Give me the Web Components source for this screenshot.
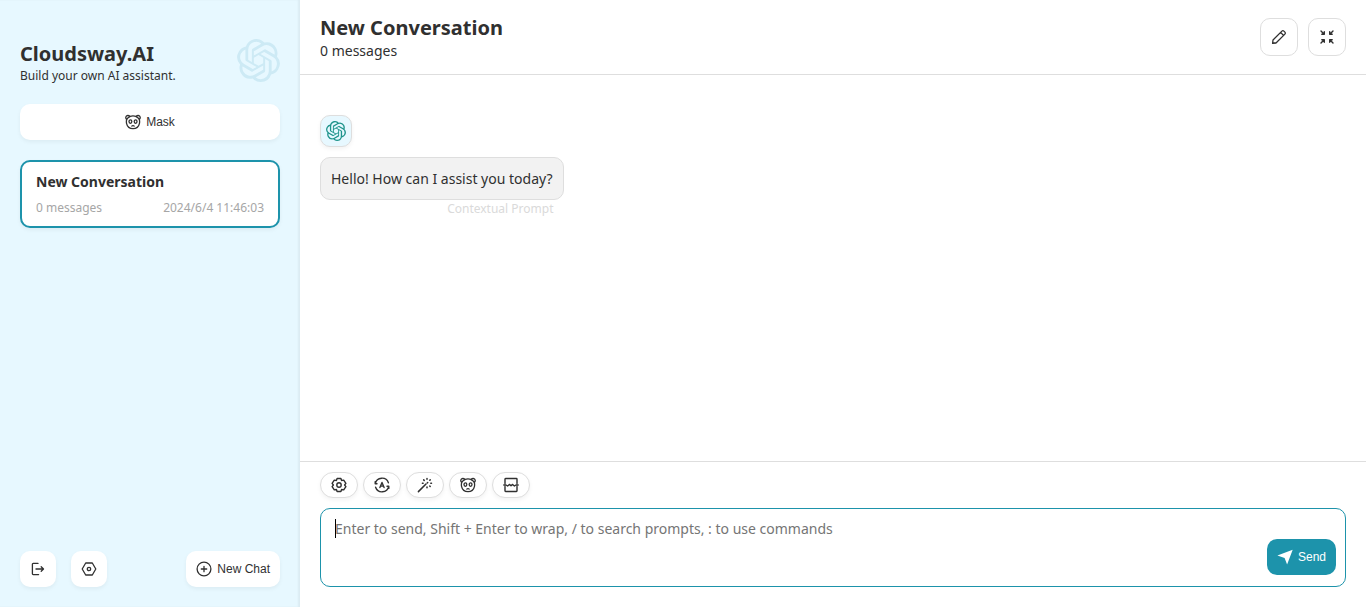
<!DOCTYPE html>
<html lang="en">
<head>
<meta charset="utf-8">
<title>Cloudsway.AI</title>
<style>
html,body{height:100%;margin:0}
body{font-family:"Noto Sans",sans-serif;color:#303030;background:#fff}
</style>
</head>
<body>
<chat-app></chat-app>
<script>
const stroke = (body, w = 1.3) => `<svg viewBox="0 0 16 16" fill="none" stroke="currentColor" stroke-width="${w}" stroke-linecap="round" stroke-linejoin="round">${body}</svg>`;
const ICONS = {
  logo: `<svg viewBox="0 0 24 24" fill="currentColor"><path d="M22.2819 9.8211a5.9847 5.9847 0 0 0-.5157-4.9108 6.0462 6.0462 0 0 0-6.5098-2.9A6.0651 6.0651 0 0 0 4.9807 4.1818a5.9847 5.9847 0 0 0-3.9977 2.9 6.0462 6.0462 0 0 0 .7427 7.0966 5.98 5.98 0 0 0 .511 4.9107 6.051 6.051 0 0 0 6.5146 2.9001A5.9847 5.9847 0 0 0 13.2599 24a6.0557 6.0557 0 0 0 5.7718-4.2058 5.9894 5.9894 0 0 0 3.9977-2.9001 6.0557 6.0557 0 0 0-.7475-7.0729zm-9.022 12.6081a4.4755 4.4755 0 0 1-2.8764-1.0408l.1419-.0804 4.7783-2.7582a.7948.7948 0 0 0 .3927-.6813v-6.7369l2.02 1.1686a.071.071 0 0 1 .038.052v5.5826a4.504 4.504 0 0 1-4.4945 4.4944zm-9.6607-4.1254a4.4708 4.4708 0 0 1-.5346-3.0137l.142.0852 4.783 2.7582a.7712.7712 0 0 0 .7806 0l5.8428-3.3685v2.3324a.0804.0804 0 0 1-.0332.0615L9.74 19.9502a4.4992 4.4992 0 0 1-6.1408-1.6464zM2.3408 7.8956a4.485 4.485 0 0 1 2.3655-1.9728V11.6a.7664.7664 0 0 0 .3879.6765l5.8144 3.3543-2.0201 1.1685a.0757.0757 0 0 1-.071 0l-4.8303-2.7865A4.504 4.504 0 0 1 2.3408 7.872zm16.5963 3.8558L13.1038 8.364 15.1192 7.2a.0757.0757 0 0 1 .071 0l4.8303 2.7913a4.4944 4.4944 0 0 1-.6765 8.1042v-5.6772a.79.79 0 0 0-.407-.667zm2.0107-3.0231l-.142-.0852-4.7735-2.7818a.7759.7759 0 0 0-.7854 0L9.409 9.2297V6.8974a.0662.0662 0 0 1 .0284-.0615l4.8303-2.7866a4.4992 4.4992 0 0 1 6.6802 4.66zM8.3065 12.863l-2.02-1.1638a.0804.0804 0 0 1-.038-.0567V6.0742a4.4992 4.4992 0 0 1 7.3757-3.4537l-.142.0805L8.704 5.459a.7948.7948 0 0 0-.3927.6813zm1.0976-2.3654l2.602-1.4998 2.6069 1.4998v2.9994l-2.5974 1.4997-2.6067-1.4997Z"/></svg>`,
  panda: stroke(`<path d="M5 2.4C6.9 1.8 9.1 1.8 11 2.4M1.8 5.2C1.3 6.6 1.3 8.3 1.6 9.7C2.3 12.8 4.8 14.7 8 14.7S13.7 12.8 14.4 9.7C14.7 8.3 14.7 6.6 14.2 5.2M1.8 5.4C.2 4.3.5 1.7 2.7 1.5C3.8 1.4 4.7 1.8 5 2.6C3.7 3.1 2.5 4 1.8 5.4M14.2 5.4C15.8 4.3 15.5 1.7 13.3 1.5C12.2 1.4 11.3 1.8 11 2.6C12.3 3.1 13.5 4 14.2 5.4M6.8 12.1C7.4 11.4 8.6 11.4 9.2 12.1"/><ellipse cx="5.4" cy="7.6" rx="1.4" ry="1.8"/><ellipse cx="10.6" cy="7.6" rx="1.4" ry="1.8"/>`),
  exit: stroke(`<path d="M8 2.4H3.2C2.7 2.4 2.4 2.7 2.4 3.2V12.8C2.4 13.3 2.7 13.6 3.2 13.6H8.6M6 8H13.4M11.2 5.7L13.5 8L11.2 10.3"/>`),
  hex: stroke(`<path d="M4.7 2H11.3L14.8 8L11.3 14H4.7L1.2 8Z"/><circle cx="8" cy="8" r="1.7"/>`),
  add: stroke(`<circle cx="8" cy="8" r="6.9"/><path d="M8 5.3V10.7M5.3 8H10.7"/>`),
  pencil: stroke(`<path d="M1.6 14.4L2 11L10.9 2.1C11.5 1.5 12.3 1.5 12.9 2.1L13.9 3.1C14.5 3.7 14.5 4.5 13.9 5.1L5 14ZM9.8 3.6L12.4 6.2M2 14L5 14"/>`),
  shrink: stroke(`<path d="M2 2L5.2 5.2M5.3 2.8V5.3H2.8M14 2L10.8 5.2M10.7 2.8V5.3H13.2M2 14L5.2 10.8M2.8 10.7H5.3V13.2M14 14L10.8 10.8M13.2 10.7H10.7V13.2"/>`, 1.4),
  gear: stroke(`<path d="M6.1 1.5H9.9L10.6 3.5L12.7 3.1L14.9 6.4L13.6 8L14.9 9.6L12.7 12.9L10.6 12.5L9.9 14.5H6.1L5.4 12.5L3.3 12.9L1.1 9.6L2.4 8L1.1 6.4L3.3 3.1L5.4 3.5Z"/><circle cx="8" cy="8" r="2.2"/>`, 1.4),
  auto: stroke(`<path d="M1.3 6.6A6.8 6.8 0 0 1 14.4 5.8M14.7 9.4A6.8 6.8 0 0 1 1.6 10.2M1.2 4.6V6.7H3M14.8 11.4V9.3H13M5.9 10.5L8 5.5L10.1 10.5M6.7 9.1H9.3"/>`, 1.4),
  wand: stroke(`<path d="M1.4 14.6L9 7"/><path d="M10 1.5V2.3M6.7 2.9L7.2 3.4M5.4 6.2H6.1M13.2 2.9L12.8 3.3M14.5 6.2H13.8M10 10.1V10.8M13.2 9.5L12.8 9.1M10.2 6L10.7 5.5"/>`, 1.5),
  cut: stroke(`<path d="M2 6.5V2.2C2 1.8 2.2 1.5 2.6 1.5H13.4C13.8 1.5 14 1.8 14 2.2V6.5M2 9.5V13.8C2 14.2 2.2 14.5 2.6 14.5H13.4C13.8 14.5 14 14.2 14 13.8V9.5M.8 8H3L4.6 9L6.4 7.4L8 8.8L9.6 7.4L11.4 9L13 8H15.2"/>`, 1.4),
  send: `<svg viewBox="0 0 16 16" fill="currentColor"><path d="M15.7.8L10.1 15.4L7.6 8.9L.4 6.4Z"/></svg>`
};

function define(name, css, html, setup) {
  const template = document.createElement('template');
  template.innerHTML = `<style>*{box-sizing:border-box}${css}</style>${html}`;
  customElements.define(name, class extends HTMLElement {
    connectedCallback() {
      if (this.shadowRoot) return;
      this.attachShadow({mode: 'open'}).append(template.content.cloneNode(true));
      if (setup) setup(this, this.shadowRoot);
    }
  });
}

define('ui-icon', `:host{display:block;flex:none;width:16px;height:16px}svg{display:block;width:100%;height:100%}`, ``,
  (host, root) => root.append(document.createRange().createContextualFragment(ICONS[host.getAttribute('name')])));

define('icon-button', `
  :host{display:block}
  button{display:flex;align-items:center;justify-content:center;gap:5px;width:100%;height:36px;padding:0 10px;
    border:0;border-radius:10px;background:#fff;color:#303030;font:12px "Liberation Sans",Arial,sans-serif;cursor:pointer}
  :host([shadow]) button{box-shadow:0 2px 4px rgba(0,0,0,.05)}
  :host([bordered]) button{height:38px;width:38px;border:1px solid #dedede}
  :host([primary]) button{background:#1d93ab;color:#fff}
  :host([pill]) button{height:26px;width:38px;border:1px solid #dedede;border-radius:20px;box-shadow:0 2px 4px rgba(0,0,0,.05)}`,
  `<button type="button"><slot></slot></button>`,
  (host, root) => {
    const button = root.querySelector('button');
    const icon = document.createElement('ui-icon');
    icon.setAttribute('name', host.getAttribute('icon'));
    button.prepend(icon);
    if (host.hasAttribute('label')) button.setAttribute('aria-label', host.getAttribute('label'));
  });

define('chat-card', `
  :host{display:block;background:#fff;border:2px solid #1d93ab;border-radius:10px;padding:10px 14px;box-shadow:0 2px 4px rgba(0,0,0,.05)}
  h2{margin:0;font-size:14px;line-height:20px}
  div{display:flex;justify-content:space-between;margin-top:8px;font-size:12px;line-height:16px;color:#a6a6a6}`,
  `<h2><slot></slot></h2><div><slot name="count"></slot><slot name="date"></slot></div>`);

define('side-bar', `
  :host{display:flex;flex-direction:column;flex:none;width:300px;padding:20px;background:#e7f8ff;box-shadow:inset -2px 0 2px rgba(0,0,0,.05)}
  header{display:flex;align-items:center;justify-content:space-between;padding:16px 0 20px}
  h1{margin:0;padding-top:4px;font-size:20px;line-height:28px}
  p{margin:0;font-size:12px;line-height:16px}
  .logo{width:43px;height:43px;color:#cdeaf5}
  chat-card{margin-top:20px}
  footer{display:flex;gap:15px;margin-top:auto}
  .square{width:36px}
  .new{margin-left:auto}`,
  `<header><div><h1>Cloudsway.AI</h1><p>Build your own AI assistant.</p></div><ui-icon class="logo" name="logo"></ui-icon></header>
   <icon-button icon="panda" shadow>Mask</icon-button>
   <chat-card>New Conversation<span slot="count">0 messages</span><time slot="date">2024/6/4 11:46:03</time></chat-card>
   <footer><icon-button class="square" icon="exit" label="Log out" shadow></icon-button>
   <icon-button class="square" icon="hex" label="Settings" shadow></icon-button>
   <icon-button class="new" icon="add" shadow>New Chat</icon-button></footer>`);

define('chat-header', `
  :host{display:flex;align-items:center;justify-content:space-between;padding:14px 20px;border-bottom:1px solid #dedede}
  h2{margin:0;font-size:20px;line-height:28px}
  p{margin:0;font-size:14px;line-height:18px}
  nav{display:flex;gap:10px}`,
  `<div><h2>New Conversation</h2><p>0 messages</p></div>
   <nav aria-label="Chat"><icon-button icon="pencil" label="Rename" bordered></icon-button><icon-button icon="shrink" label="Exit full screen" bordered></icon-button></nav>`);

define('chat-message', `
  :host{display:flex;flex-direction:column;align-items:flex-start}
  .avatar{display:grid;place-items:center;width:32px;height:32px;border:1px solid #dedede;border-radius:10px;background:#e7f8ff;color:#1f948c;box-shadow:0 2px 4px rgba(0,0,0,.05)}
  .avatar ui-icon{width:20px;height:20px}
  .text{margin-top:10px;padding:10px;border:1px solid #dedede;border-radius:10px;background:#f2f2f2;font-size:14px;line-height:21px}
  .note{padding-right:10px;font-size:12px;line-height:18px;color:#dadada;text-align:right}`,
  `<div class="avatar"><ui-icon name="logo"></ui-icon></div>
   <div><div class="text"><slot></slot></div><div class="note"><slot name="note"></slot></div></div>`);

define('chat-input', `
  :host{display:block;padding:10px 20px 20px;border-top:1px solid #dedede}
  .tools{display:flex;gap:5px}
  .field{position:relative;display:flex;margin-top:10px}
  textarea{display:block;flex:1;height:79px;padding:10px 90px 10px 14px;border:1px solid #1d93ab;border-radius:10px;outline:0;resize:none;
    background:#fff;color:#303030;font:14px/19px "Noto Sans",sans-serif;caret-color:transparent}
  textarea::placeholder{color:#757575}
  .caret{position:absolute;left:15px;top:11px;width:1px;height:19px;background:#000}
  .send{position:absolute;right:10px;bottom:12px}`,
  `<div class="tools"><icon-button icon="gear" label="Chat settings" pill></icon-button><icon-button icon="auto" label="Theme" pill></icon-button>
   <icon-button icon="wand" label="Prompts" pill></icon-button><icon-button icon="panda" label="Masks" pill></icon-button>
   <icon-button icon="cut" label="Clear context" pill></icon-button></div>
   <div class="field"><textarea aria-label="Message" placeholder="Enter to send, Shift + Enter to wrap, / to search prompts, : to use commands"></textarea>
   <span class="caret"></span><icon-button class="send" icon="send" primary>Send</icon-button></div>`);

define('chat-app', `
  :host{display:flex;min-height:100%}
  main{display:flex;flex-direction:column;flex:1;min-width:0}
  section{flex:1;padding:40px 20px 20px}`,
  `<side-bar></side-bar><main><chat-header></chat-header>
   <section><chat-message>Hello! How can I assist you today?<span slot="note">Contextual Prompt</span></chat-message></section>
   <chat-input></chat-input></main>`);
</script>
</body>
</html>
